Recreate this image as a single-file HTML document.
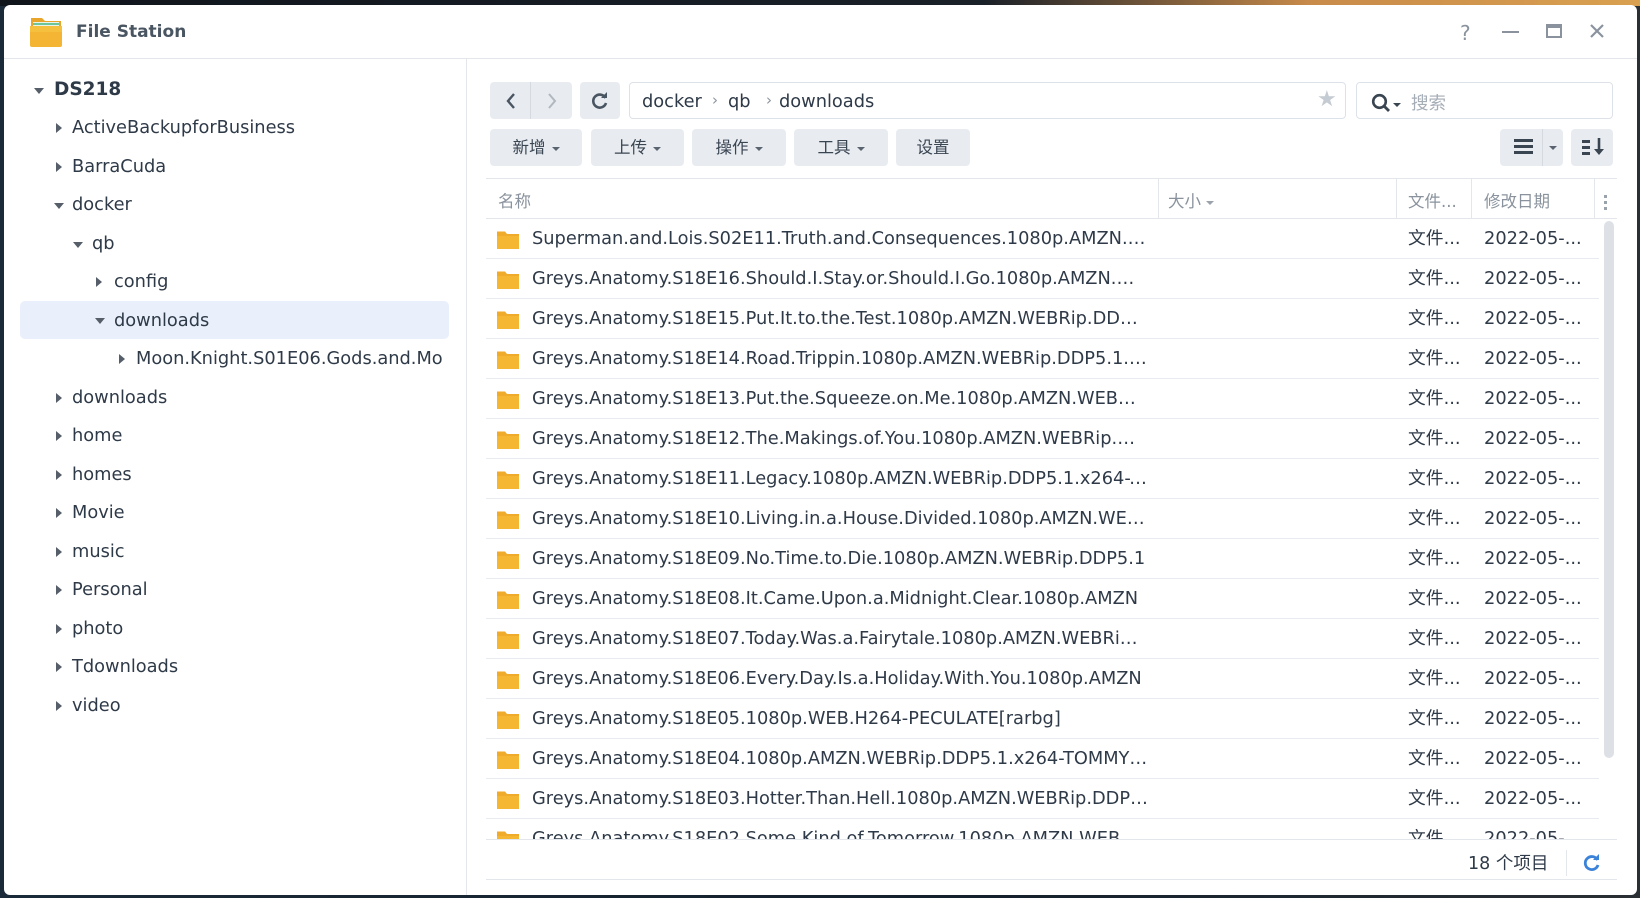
<!DOCTYPE html>
<html><head><meta charset="utf-8">
<style>
*{box-sizing:border-box;margin:0;padding:0}
body{width:1640px;height:898px;overflow:hidden;background:linear-gradient(90deg,#1b2a38 0%,#14202c 60%,#2a2f33 100%);font-family:"DejaVu Sans","Noto Sans CJK SC",sans-serif;color:#2f3a48;position:relative}
.topbg{position:absolute;left:0;top:0;width:1640px;height:6px;background:linear-gradient(90deg,#10151c,#1a2028 60%,#c98b4a 80%,#d9a050)}
.win{position:absolute;left:4px;top:5px;width:1633px;height:890px;background:#fff;border-radius:6px;overflow:hidden}
.a{position:absolute}
.title{left:72px;top:17px;font:bold 17px "DejaVu Sans",sans-serif;color:#4a5562}
.hl{height:1px;background:#e3e7ec}
.vl{width:1px;background:#e3e7ec}
.tr{position:absolute;font-size:17.8px;white-space:nowrap;line-height:20px}
.arr{position:absolute;width:0;height:0}
.ar{border-top:5px solid transparent;border-bottom:5px solid transparent;border-left:6px solid #555e69}
.ad{border-left:5px solid transparent;border-right:5px solid transparent;border-top:6px solid #555e69}
.btn{position:absolute;background:#e8ecf1;border-radius:4px;height:37px;font-size:16.5px;line-height:37px;text-align:center;color:#3a4552}
.btn .c{display:inline-block;width:0;height:0;border-left:4px solid transparent;border-right:4px solid transparent;border-top:4px solid #5a6470;vertical-align:middle;margin-left:6px}
.row{position:absolute;left:482px;width:1113px;height:40px;border-bottom:1px solid #e8ecf0}
.fold{position:absolute;left:11px;top:11px;width:22px;height:19px}
.nm{position:absolute;left:46px;top:9px;width:616px;font-size:17.8px;white-space:nowrap;overflow:hidden;text-overflow:ellipsis;line-height:22px}
.ty{position:absolute;left:922px;top:9px;font-size:17.8px;line-height:22px}
.dt{position:absolute;left:998px;top:9px;font-size:17.8px;line-height:22px}
.hd{position:absolute;top:188px;font-size:16.5px;color:#8a939d}
</style></head><body>
<div class="topbg"></div>
<div class="win">
 <svg class="a" style="left:25px;top:9px" width="34" height="34" viewBox="0 0 34 34">
  <path d="M2 4h11l3 3h16v24H2z" fill="#e8a52a"/>
  <rect x="4" y="8" width="26" height="8" fill="#e8f3ea"/>
  <rect x="4" y="9" width="26" height="2" fill="#6dc59a"/>
  <path d="M1 12h32v19a2 2 0 0 1-2 2H3a2 2 0 0 1-2-2z" fill="#f4b534"/>
  <path d="M1 12h32v6H1z" fill="#f7c544" opacity=".7"/>
 </svg>
 <div class="a title">File Station</div>
 <div class="a" style="left:1456px;top:16px;font-size:20px;color:#8a939d">?</div>
 <div class="a" style="left:1498px;top:26px;width:17px;height:2px;background:#8a939d"></div>
 <div class="a" style="left:1542px;top:19px;width:16px;height:14px;border:2px solid #8a939d;border-top-width:4px"></div>
 <svg class="a" style="left:1585px;top:18px" width="16" height="16"><path d="M2 2L14 14M14 2L2 14" stroke="#8a939d" stroke-width="2.2"/></svg>
 <div class="a hl" style="left:0;top:53px;width:1633px"></div>
 <div class="a vl" style="left:462px;top:54px;height:840px"></div>

 <div class="a" style="left:16px;top:296px;width:429px;height:38px;background:#e9f0fb;border-radius:5px"></div>
 <div class="arr ad" style="left:30px;top:83px"></div><div class="tr" style="left:50px;top:75px;font-weight:bold;font-size:18.5px">DS218</div>
 <div class="arr ar" style="left:52px;top:118px"></div><div class="tr" style="left:68px;top:113px">ActiveBackupforBusiness</div>
 <div class="arr ar" style="left:52px;top:157px"></div><div class="tr" style="left:68px;top:152px">BarraCuda</div>
 <div class="arr ad" style="left:50px;top:198px"></div><div class="tr" style="left:68px;top:190px">docker</div>
 <div class="arr ad" style="left:69px;top:237px"></div><div class="tr" style="left:88px;top:229px">qb</div>
 <div class="arr ar" style="left:92px;top:272px"></div><div class="tr" style="left:110px;top:267px">config</div>
 <div class="arr ad" style="left:91px;top:313px"></div><div class="tr" style="left:110px;top:306px">downloads</div>
 <div class="arr ar" style="left:115px;top:349px"></div><div class="tr" style="left:132px;top:344px;width:313px;overflow:hidden">Moon.Knight.S01E06.Gods.and.Mo</div>
 <div class="arr ar" style="left:52px;top:388px"></div><div class="tr" style="left:68px;top:383px">downloads</div>
 <div class="arr ar" style="left:52px;top:426px"></div><div class="tr" style="left:68px;top:421px">home</div>
 <div class="arr ar" style="left:52px;top:465px"></div><div class="tr" style="left:68px;top:460px">homes</div>
 <div class="arr ar" style="left:52px;top:503px"></div><div class="tr" style="left:68px;top:498px">Movie</div>
 <div class="arr ar" style="left:52px;top:542px"></div><div class="tr" style="left:68px;top:537px">music</div>
 <div class="arr ar" style="left:52px;top:580px"></div><div class="tr" style="left:68px;top:575px">Personal</div>
 <div class="arr ar" style="left:52px;top:619px"></div><div class="tr" style="left:68px;top:614px">photo</div>
 <div class="arr ar" style="left:52px;top:657px"></div><div class="tr" style="left:68px;top:652px">Tdownloads</div>
 <div class="arr ar" style="left:52px;top:696px"></div><div class="tr" style="left:68px;top:691px">video</div>

 <div class="btn" style="left:486px;top:77px;width:82px"></div>
 <div class="a vl" style="left:526px;top:77px;height:37px;background:#d5dae0"></div>
 <svg class="a" style="left:500px;top:86px" width="14" height="20"><path d="M10 3L4 10L10 17" fill="none" stroke="#4a5562" stroke-width="2.4"/></svg>
 <svg class="a" style="left:541px;top:86px" width="14" height="20"><path d="M4 3L10 10L4 17" fill="none" stroke="#b0b7bf" stroke-width="2"/></svg>
 <div class="btn" style="left:576px;top:77px;width:40px"></div>
 <svg class="a" style="left:586px;top:86px" width="20" height="20" viewBox="0 0 20 20"><path d="M15.5 7A6.5 6.5 0 1 0 16 12" fill="none" stroke="#4a5562" stroke-width="2.6"/><path d="M11 7h6V1z" fill="#4a5562"/></svg>
 <div class="a" style="left:625px;top:77px;width:717px;height:37px;border:1px solid #dde2e8;border-radius:4px"></div>
 <div class="a" style="left:638px;top:86px;font-size:17.8px">docker</div>
 <div class="a" style="left:708px;top:86px;font-size:15px;color:#8a939d">›</div>
 <div class="a" style="left:724px;top:86px;font-size:17.8px">qb</div>
 <div class="a" style="left:762px;top:86px;font-size:15px;color:#8a939d">›</div>
 <div class="a" style="left:775px;top:86px;font-size:17.8px">downloads</div>
 <div class="a" style="left:1313px;top:82px;font-size:22px;color:#c5cbd2">★</div>
 <div class="a" style="left:1352px;top:77px;width:257px;height:37px;border:1px solid #dde2e8;border-radius:4px"></div>
 <svg class="a" style="left:1367px;top:88px" width="20" height="20"><circle cx="8.5" cy="8.5" r="6.3" fill="none" stroke="#3a4552" stroke-width="2.6"/><path d="M13 13L18 18" stroke="#3a4552" stroke-width="2.8"/></svg>
 <div class="arr ad" style="left:1389px;top:98px;border-top-color:#3a4552;border-left-width:4px;border-right-width:4px;border-top-width:4px"></div>
 <div class="a" style="left:1407px;top:85px;font-size:17.5px;color:#a5adb6">搜索</div>

 <div class="btn" style="left:486px;top:124px;width:92px">新增<span class="c"></span></div>
 <div class="btn" style="left:587px;top:124px;width:93px">上传<span class="c"></span></div>
 <div class="btn" style="left:688px;top:124px;width:94px">操作<span class="c"></span></div>
 <div class="btn" style="left:790px;top:124px;width:94px">工具<span class="c"></span></div>
 <div class="btn" style="left:892px;top:124px;width:74px">设置</div>
 <div class="btn" style="left:1496px;top:124px;width:63px"></div>
 <div class="a vl" style="left:1538px;top:124px;height:37px;background:#d5dae0"></div>
 <div class="a" style="left:1510px;top:134px;width:19px;height:3px;background:#3a4552;box-shadow:0 6px 0 #3a4552,0 12px 0 #3a4552"></div>
 <div class="arr ad" style="left:1545px;top:141px;border-left-width:4px;border-right-width:4px;border-top-width:4px;border-top-color:#5a6470"></div>
 <div class="btn" style="left:1567px;top:124px;width:42px"></div>
 <div class="a" style="left:1578px;top:135px;width:8px;height:3px;background:#3a4552;box-shadow:0 6px 0 #3a4552,0 12px 0 #3a4552"></div>
 <svg class="a" style="left:1589px;top:132px" width="12" height="20"><path d="M6 1V16" stroke="#3a4552" stroke-width="2.6"/><path d="M1 12L6 18L11 12z" fill="#3a4552"/></svg>

 <div class="a hl" style="left:482px;top:173px;width:1131px"></div>
 <div class="hd" style="left:494px;top:183px">名称</div>
 <div class="a vl" style="left:1154px;top:174px;height:39px"></div>
 <div class="hd" style="left:1164px;top:183px">大小 <span style="display:inline-block;border-left:4px solid transparent;border-right:4px solid transparent;border-top:4px solid #9aa2ab;vertical-align:middle"></span></div>
 <div class="a vl" style="left:1392px;top:174px;height:39px"></div>
 <div class="hd" style="left:1404px;top:183px">文件...</div>
 <div class="a vl" style="left:1467px;top:174px;height:39px"></div>
 <div class="hd" style="left:1480px;top:183px">修改日期</div>
 <div class="a vl" style="left:1590px;top:174px;height:39px"></div>
 <div class="a" style="left:1600px;top:190px;width:3px;height:3px;background:#9aa2ab;box-shadow:0 6px 0 #9aa2ab,0 12px 0 #9aa2ab"></div>
 <div class="a hl" style="left:482px;top:213px;width:1131px"></div>

 <div class="a" style="left:0;top:214px;width:1633px;height:621px;overflow:hidden">
  <div style="position:relative;top:-214px">
  <div id="rows"></div>
  </div>
 </div>
 <div class="a" style="left:1600px;top:216px;width:10px;height:537px;background:#dde1e6;border-radius:5px"></div>

 <div class="a hl" style="left:482px;top:834px;width:1131px"></div>
 <div class="a" style="left:1464px;top:845px;font-size:17.5px">18 个项目</div>
 <div class="a vl" style="left:1562px;top:845px;height:26px"></div>
 <svg class="a" style="left:1578px;top:848px" width="20" height="20" viewBox="0 0 20 20"><path d="M15.5 7A6.5 6.5 0 1 0 16 12" fill="none" stroke="#3b82d9" stroke-width="2.8"/><path d="M11 7h6V1z" fill="#3b82d9"/></svg>
 <div class="a hl" style="left:482px;top:874px;width:1131px"></div>
</div>
<script>
var n=["Superman.and.Lois.S02E11.Truth.and.Consequences.1080p.AMZN.WEBRip","Greys.Anatomy.S18E16.Should.I.Stay.or.Should.I.Go.1080p.AMZN.WEBRip","Greys.Anatomy.S18E15.Put.It.to.the.Test.1080p.AMZN.WEBRip.DDP5.1","Greys.Anatomy.S18E14.Road.Trippin.1080p.AMZN.WEBRip.DDP5.1.x264","Greys.Anatomy.S18E13.Put.the.Squeeze.on.Me.1080p.AMZN.WEBRip.DDP","Greys.Anatomy.S18E12.The.Makings.of.You.1080p.AMZN.WEBRip.DDP5.1","Greys.Anatomy.S18E11.Legacy.1080p.AMZN.WEBRip.DDP5.1.x264-TOMMY","Greys.Anatomy.S18E10.Living.in.a.House.Divided.1080p.AMZN.WEBRip","Greys.Anatomy.S18E09.No.Time.to.Die.1080p.AMZN.WEBRip.DDP5.1","Greys.Anatomy.S18E08.It.Came.Upon.a.Midnight.Clear.1080p.AMZN","Greys.Anatomy.S18E07.Today.Was.a.Fairytale.1080p.AMZN.WEBRip.DDP","Greys.Anatomy.S18E06.Every.Day.Is.a.Holiday.With.You.1080p.AMZN","Greys.Anatomy.S18E05.1080p.WEB.H264-PECULATE[rarbg]","Greys.Anatomy.S18E04.1080p.AMZN.WEBRip.DDP5.1.x264-TOMMY[rarbg]","Greys.Anatomy.S18E03.Hotter.Than.Hell.1080p.AMZN.WEBRip.DDP5.1","Greys.Anatomy.S18E02.Some.Kind.of.Tomorrow.1080p.AMZN.WEBRip"];
var h="";for(var i=0;i<n.length;i++){var t=214+40*i;
h+='<div class="row" style="top:'+t+'px"><svg class="fold" viewBox="0 0 22 19"><path d="M0 1.5h8l2 2.5H22v15H0z" fill="#f0ab2a"/><path d="M0 6h22v13H0z" fill="#f5b731"/></svg><div class="nm">'+n[i]+'</div><div class="ty">文件...</div><div class="dt">2022-05-...</div></div>';}
document.getElementById("rows").innerHTML=h;
</script>
</body></html>
